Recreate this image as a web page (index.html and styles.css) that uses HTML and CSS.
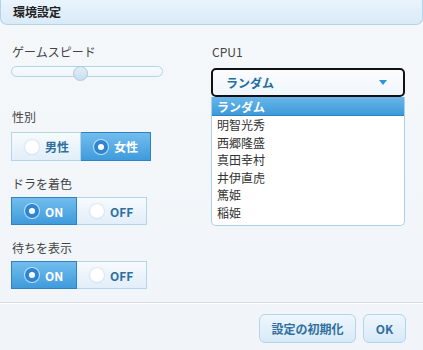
FILE: index.html
```html
<!DOCTYPE html>
<html lang="ja">
    <head>
        <meta charset="UTF-8" />
        <title>環境設定</title>
        <link rel="stylesheet" href="styles.css">
    </head>
    <body>
        <div class="dialog">
            <div class="titlebar">環境設定</div>

            <div class="content">
                <div class="col-left">
                    <div class="label first">ゲームスピード</div>
                    <div class="slider">
                        <div class="track"></div>
                        <div class="thumb" style="left: 41%"></div>
                    </div>

                    <div class="label gap-big">性別</div>
                    <div class="seg tall">
                        <div class="seg-btn"><span class="radio"></span>男性</div>
                        <div class="seg-btn active"><span class="radio"></span>女性</div>
                    </div>

                    <div class="label gap">ドラを着色</div>
                    <div class="seg">
                        <div class="seg-btn on active"><span class="radio"></span>ON</div>
                        <div class="seg-btn off"><span class="radio"></span>OFF</div>
                    </div>

                    <div class="label gap">待ちを表示</div>
                    <div class="seg">
                        <div class="seg-btn on active"><span class="radio"></span>ON</div>
                        <div class="seg-btn off"><span class="radio"></span>OFF</div>
                    </div>
                </div>

                <div class="col-right">
                    <div class="label first">CPU1</div>
                    <div class="select">
                        <span>ランダム</span>
                        <span class="arrow"></span>
                    </div>
                    <div class="options">
                        <div class="option selected">ランダム</div>
                        <div class="option">明智光秀</div>
                        <div class="option">西郷隆盛</div>
                        <div class="option">真田幸村</div>
                        <div class="option">井伊直虎</div>
                        <div class="option">篤姫</div>
                        <div class="option">稲姫</div>
                    </div>
                </div>
            </div>

            <div class="footer">
                <button class="btn reset">設定の初期化</button>
                <button class="btn ok">OK</button>
            </div>
        </div>
    </body>
</html>
```

FILE: styles.css
```css
body {
    margin: 0;
    padding: 0;
    font-family: "Noto Sans CJK JP", "Noto Sans", sans-serif;
    font-size: 12px;
    color: #3c3c3c;
    background: #f2f5f9;
}

.dialog {
    width: 423px;
    height: 350px;
    background: linear-gradient(to bottom, #f5f8fb, #f1f4f8);
}

.titlebar {
    height: 24px;
    line-height: 24px;
    padding-left: 12px;
    font-weight: bold;
    color: #222;
    background: linear-gradient(to bottom, #eaf4fc, #d9eaf7);
    border: 1px solid #b2d3eb;
    border-top: none;
    border-radius: 0 0 7px 7px;
    width: 409px;
}

.content {
    display: flex;
    padding-left: 11px;
    height: 277px;
    border-bottom: 1px solid #d6dce3;
    box-shadow: 0 1px 0 #ffffff;
}

.col-left {
    width: 200px;
}

.col-right {
    width: 194px;
}

.label {
    height: 16px;
    line-height: 16px;
    padding-left: 1px;
    color: #444;
}

.label.first {
    margin-top: 19px;
}

.label.gap-big {
    margin-top: 29px;
}

.label.gap {
    margin-top: 15px;
}

.slider {
    position: relative;
    width: 152px;
    height: 14px;
    margin-top: 6px;
}

.track {
    margin-top: 2px;
    height: 9px;
    border: 1px solid #b4d4ea;
    border-radius: 6px;
    background: linear-gradient(to bottom, #f8fbfe, #eef5fb);
}

.thumb {
    position: absolute;
    top: 0;
    width: 13px;
    height: 13px;
    border: 1px solid #a9c9e2;
    border-radius: 50%;
    background: linear-gradient(to bottom, #e3eef8, #c9def0);
}

.seg {
    display: flex;
    margin-top: 5px;
    height: 28px;
}

.seg.tall {
    margin-top: 7px;
    height: 29px;
}

.seg-btn {
    display: flex;
    align-items: center;
    gap: 6px;
    box-sizing: border-box;
    width: 70px;
    padding-left: 13px;
    font-weight: bold;
    color: #2f6f9f;
    border: 1px solid #b4d4ea;
    background: linear-gradient(to bottom, #f7fbfe, #e1eef9);
}

.seg-btn + .seg-btn {
    border-left: none;
}

.seg-btn.on {
    width: 66px;
}

.seg-btn.off {
    width: 70px;
}

.seg-btn.active {
    color: #fff;
    border-color: #2e82c2;
    background: linear-gradient(to bottom, #72bdee, #3f9bdb);
}

.seg-btn.active + .seg-btn,
.seg-btn + .seg-btn.active {
    border-left: none;
}

.radio {
    width: 14px;
    height: 14px;
    border-radius: 50%;
    background: #fff;
    box-shadow: 0 0 2px rgba(120, 160, 200, 0.5);
    box-sizing: border-box;
}

.active .radio {
    border: 4px solid #2d86cf;
    box-shadow: 0 0 0 1px #bfe0f7;
}

.select {
    display: flex;
    align-items: center;
    justify-content: space-between;
    box-sizing: border-box;
    height: 29px;
    margin-top: 8px;
    padding: 0 16px 0 13px;
    border: 2px solid #111;
    border-radius: 5px;
    background: linear-gradient(to bottom, #fbfdff, #f0f6fb);
    font-weight: bold;
    color: #1f6c9f;
}

.arrow {
    width: 0;
    height: 0;
    border-left: 4px solid transparent;
    border-right: 4px solid transparent;
    border-top: 5px solid #2f93d6;
}

.options {
    box-sizing: border-box;
    height: 129px;
    border: 1px solid #aecfe8;
    border-top: none;
    border-radius: 0 0 5px 5px;
    background: #fff;
}

.option {
    height: 17.6px;
    line-height: 17px;
    padding-left: 5px;
    color: #333;
}

.option.selected {
    height: 19px;
    line-height: 19px;
    color: #fff;
    font-weight: bold;
    background: linear-gradient(to bottom, #68b6eb, #3c9ad9);
    border-bottom: 1px solid #2e82c2;
    box-sizing: border-box;
}

.footer {
    display: flex;
    justify-content: flex-end;
    gap: 7px;
    padding: 11px 17px 0 0;
}

.btn {
    height: 29px;
    font-family: "Noto Sans CJK JP", "Noto Sans", sans-serif;
    font-size: 12px;
    font-weight: bold;
    color: #2f6f9f;
    border: 1px solid #b4d4ea;
    border-radius: 6px;
    background: linear-gradient(to bottom, #eef6fd, #d8eaf7);
    padding: 0;
}

.btn.reset {
    width: 97px;
}

.btn.ok {
    width: 43px;
}
```
